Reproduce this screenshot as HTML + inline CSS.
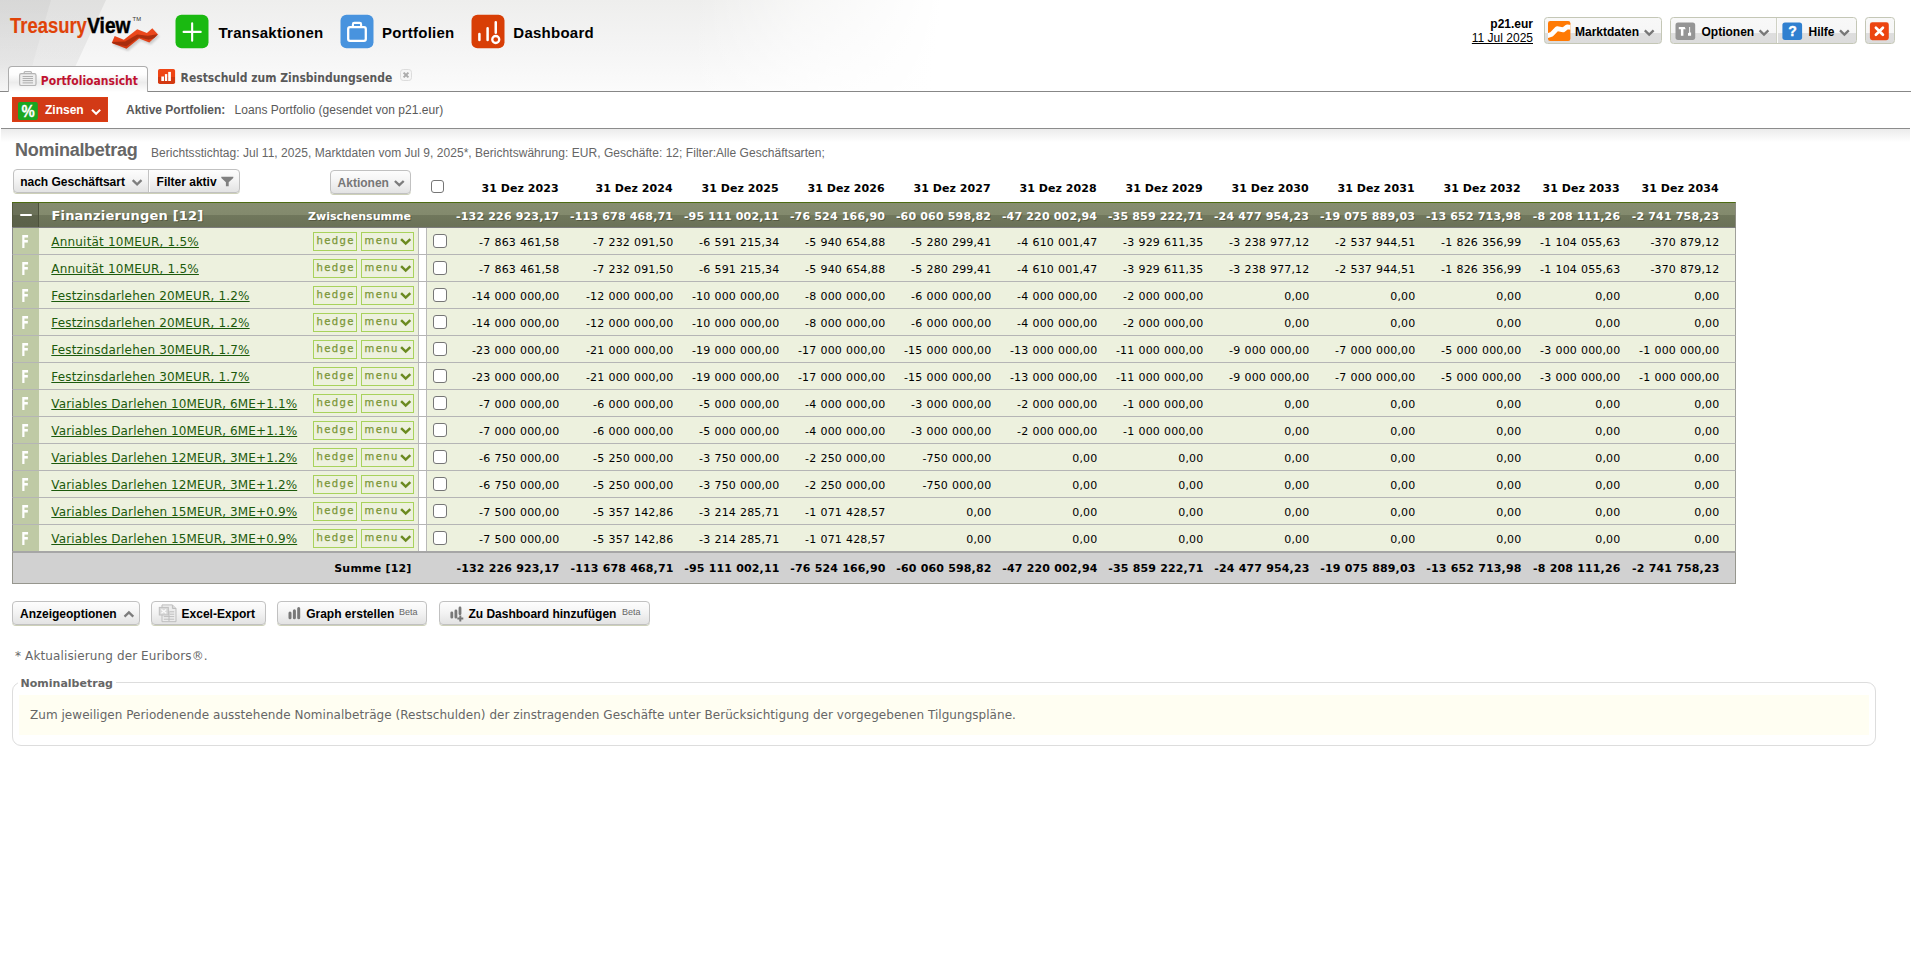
<!DOCTYPE html>
<html lang="de"><head><meta charset="utf-8"><title>TreasuryView - Portfolioansicht</title>
<style>
html,body{margin:0;padding:0}
body{width:1912px;height:954px;overflow:hidden;background:#fff;position:relative;font-family:"Liberation Sans",sans-serif;font-size:12px;color:#000}
*{box-sizing:border-box}
.V{font-family:"DejaVu Sans","Liberation Sans",sans-serif}
/* ---------- header ---------- */
#hdr{position:absolute;left:0;top:0;width:1912px;height:91px;
 background:linear-gradient(97deg,rgba(255,255,255,0) 0,rgba(255,255,255,0) 690px,rgba(255,255,255,.55) 800px,rgba(255,255,255,1) 935px),linear-gradient(to bottom,#eeeeed 0,#f4f4f4 45px,#fbfbfb 91px)}
#hdr svg.bg{position:absolute;left:0;top:0}
#hline{position:absolute;left:0;top:91px;width:1911px;height:1px;background:#878787}
#logo{position:absolute;left:0;top:0}
.nav{position:absolute;top:14.7px;width:33px;height:33.5px;border-radius:6px}
.navt{position:absolute;top:24px;font:bold 15px/18px "Liberation Sans",sans-serif;color:#000;white-space:nowrap;letter-spacing:0.25px}
#user{position:absolute;left:1400px;width:133px;top:16px;text-align:right;font:12px/15px "Liberation Sans",sans-serif;color:#000}
#user b{display:block;position:relative;top:1.3px}
#user u{display:block}
.tb{position:absolute;top:17px;height:27px;border:1px solid #c4c7b6;border-radius:3.5px;background:linear-gradient(to bottom,#f8f8f8 0,#f6f6f6 59%,#dedede 62%,#dcdcdc 100%);font:bold 12px/25px "Liberation Sans",sans-serif;color:#000;white-space:nowrap}
.tb span{position:absolute;top:1.5px}
.tb svg{position:absolute}
/* tabs */
#tab1{position:absolute;left:8px;top:66px;width:140px;height:26px;border:1px solid #adadad;border-bottom:none;border-radius:4px 4px 0 0;background:linear-gradient(to bottom,#fff 0,#fdfdfd 30%,#ececec 62%,#fff 100%)}
.tabt{position:absolute;font:bold 12px/15px "DejaVu Sans Condensed","DejaVu Sans",sans-serif;white-space:nowrap}
/* toolbar */
#tool{position:absolute;left:0;top:92px;width:1912px;height:36px;background:#fff}
#tline{position:absolute;left:1px;top:128px;width:1909px;height:1px;background:#8c8c8c}
#tshade{position:absolute;left:1px;top:129px;width:1909px;height:13px;background:linear-gradient(to bottom,#ebebeb,#fff)}
#zins{position:absolute;left:12px;top:97px;width:96px;height:25px;background:#d23a16;border:1px solid #de3d12}
#zins span{position:absolute;left:32px;top:5px;font:bold 12px/15px "Liberation Sans",sans-serif;color:#fff}
.g{color:#595959}
/* heading */
#h1{position:absolute;left:15px;top:139px;font:bold 18px/22px "Liberation Sans",sans-serif;color:#666;letter-spacing:-0.27px;white-space:nowrap}
#h1s{position:absolute;left:151px;top:146px;font:12px/15px "Liberation Sans",sans-serif;color:#666;white-space:nowrap;letter-spacing:0.035px}
.btn{position:absolute;height:24px;border:1px solid #c1c1c1;border-radius:4px;background:linear-gradient(to bottom,#fdfdfd 0,#f4f4f4 45%,#e3e3e3 100%);box-shadow:0 1px 0 #cdd0b8;font:bold 12px/22px "Liberation Sans",sans-serif;color:#000;white-space:nowrap}
.btn span{position:absolute;top:1px}
.btn svg{position:absolute}
.beta{font:9px/10px "Liberation Sans",sans-serif;color:#666;font-weight:normal}
/* ---------- table ---------- */
#tbl{position:absolute;left:0;top:0;width:1912px;height:600px;font-family:"DejaVu Sans",sans-serif}
.n{position:absolute;width:130px;text-align:right;white-space:nowrap;font-size:11px}
#colhdr{position:absolute;left:0;top:0}
.ch{margin-left:-.3px;top:181px;line-height:15px;font-weight:bold;color:#000;letter-spacing:.05px}
#grp{position:absolute;left:12px;top:202px;width:1724px;height:26px;border-top:1px solid #4d6b12;border-bottom:1px solid #7d7d7d;border-right:1px solid #8c8c80;background:linear-gradient(to bottom,#868d70 0,#838a6d 50%,#70775c 52%,#6a7157 100%)}
#grp .n,#sum .n,.row .n{margin-left:-12.4px}
#grp .tg{position:absolute;left:0;top:0;width:27px;height:24px;border-left:1px solid #55593f;border-right:1px solid #4c513b;background:linear-gradient(to bottom,#6c725a 0,#6b7158 50%,#5d634b 52%,#5b6149 100%)}
#grp .tg i{position:absolute;left:7px;top:11px;width:12px;height:2px;background:#fff;border-radius:1px}
.gt{position:absolute;left:39.4px;top:4px;font:bold 13px/18px "DejaVu Sans",sans-serif;color:#fff;letter-spacing:0.2px;text-shadow:1px 1px 0 rgba(60,60,40,.5)}
.zs{position:absolute;left:296px;top:6px;font:bold 11px/15px "DejaVu Sans",sans-serif;color:#fff;text-shadow:1px 1px 0 rgba(60,60,40,.5)}
.gs{margin-left:-11.8px !important;top:6px;line-height:15px;font-weight:bold;color:#fff;letter-spacing:.17px;text-shadow:1px 1px 0 rgba(60,60,40,.5)}
.row{position:absolute;left:12px;width:1724px;height:27px;background:#edf1de;border-left:1px solid #8a8a8a;border-right:1px solid #a0a09a;border-bottom:1px solid #b5b5b5}
.row .f{position:absolute;left:0;top:0;width:26px;height:26px;background:#bfcaa5}
.row .f b{position:absolute;left:-1.2px;top:4px;width:26px;text-align:center;font:bold 17px/20px "DejaVu Sans Condensed","DejaVu Sans",sans-serif;color:#fff;transform:scaleX(.74)}
.lnk{position:absolute;left:38.3px;top:6px;font:12px/16px "DejaVu Sans",sans-serif;color:#1c5a0c;text-decoration:underline;letter-spacing:0.13px;white-space:nowrap}
.hb{position:absolute;top:4px;height:19px;border:1px solid #a8d25c;font:10px/13px "DejaVu Sans",sans-serif;color:#7a9637;letter-spacing:1.35px;padding:1px 0 0 2.6px;-webkit-text-stroke:.25px #7a9637}
.hedge{left:300px;width:44px}
.menu{left:348px;width:53px}
.menu svg{position:absolute;left:37.6px;top:4.6px}
.gap{position:absolute;left:405px;top:0;width:9px;height:26px;background:#fff;border-left:1px solid #b9b9b9;border-right:1px solid #b9b9b9}
.cb{position:absolute;left:420px;top:6px;width:14px;height:14px;border:1px solid #767676;border-radius:3px;background:#fff}
.d{top:7px;line-height:15px;color:#000;word-spacing:0.6px;letter-spacing:.12px;margin-left:-12.7px !important}
#sum{position:absolute;left:12px;top:551px;width:1724px;height:33px;background:#d1d1d1;border:1px solid #96968e;border-top:2px solid #a6a6a6}
.sl{position:absolute;left:199.6px;width:199px;top:8px;text-align:right;font:bold 11px/15px "DejaVu Sans",sans-serif;color:#000;letter-spacing:.2px}
.sm{top:8px;line-height:15px;font-weight:bold;color:#000;letter-spacing:.17px}
/* footer */
#note{position:absolute;left:15px;top:649px;font:12px/15px "DejaVu Sans",sans-serif;color:#666;letter-spacing:0.12px;white-space:nowrap}
#fs{position:absolute;left:12px;top:682px;width:1864px;height:64px;border:1px solid #ddd;border-radius:9px}
#fs b{position:absolute;left:4.6px;top:-6px;padding:0 3px;background:#fff;font:bold 11px/14px "DejaVu Sans",sans-serif;color:#666}
#fs div{position:absolute;left:6px;top:12px;width:1850px;height:40px;background:#fffef2;box-sizing:border-box;padding:13px 0 0 11px;font:12px/15px "DejaVu Sans",sans-serif;color:#666;letter-spacing:0.04px;white-space:nowrap}

</style></head><body>
<div id="hdr">
<svg class="bg" width="200" height="91" viewBox="0 0 200 91">
 <defs><linearGradient id="fa" x1="0" y1="0" x2="0" y2="1"><stop offset="0" stop-color="#000" stop-opacity=".095"/><stop offset=".7" stop-color="#000" stop-opacity=".07"/><stop offset="1" stop-color="#000" stop-opacity=".02"/></linearGradient>
 <linearGradient id="fb" x1="0" y1="0" x2="0" y2="1"><stop offset="0" stop-color="#000" stop-opacity=".06"/><stop offset=".7" stop-color="#000" stop-opacity=".05"/><stop offset="1" stop-color="#000" stop-opacity=".015"/></linearGradient></defs>
 <polygon points="0,0 51,0 25,91 0,91" fill="url(#fa)"/>
 <polygon points="51,0 106,0 64,91 25,91" fill="url(#fb)"/>
</svg>
<svg id="logo" width="170" height="60" viewBox="0 0 170 60">
 <defs><linearGradient id="sw" x1="0" y1="0" x2="0" y2="1"><stop offset="0" stop-color="#ee4a1e"/><stop offset=".5" stop-color="#e8441a"/><stop offset="1" stop-color="#cc3812"/></linearGradient>
 <filter id="bl" x="-20%" y="-20%" width="140%" height="140%"><feGaussianBlur stdDeviation=".55"/></filter>
 <filter id="bs" x="-20%" y="-20%" width="140%" height="150%"><feGaussianBlur stdDeviation="1"/></filter>
 <clipPath id="swc"><polygon points="114.7,36.1 123.8,39.8 137.2,29.2 146.9,32.9 152.3,28.2 158,34.4 149.3,42.5 139.2,38.4 126.5,48.8 111.7,43.1"/></clipPath></defs>
 <polygon points="116.2,38.3 125.3,42 138.7,31.4 148.4,35.1 153.8,30.4 159.5,36.6 150.8,44.7 140.7,40.6 128,51 113.2,45.3" fill="#000" opacity=".16" filter="url(#bs)"/>
 <polygon points="114.7,36.1 123.8,39.8 137.2,29.2 146.9,32.9 152.3,28.2 158,34.4 149.3,42.5 139.2,38.4 126.5,48.8 111.7,43.1" fill="url(#sw)"/>
 <g clip-path="url(#swc)"><polygon points="112,42.1 125.1,41.6 137.2,34.6 147.9,35.7 157.6,34.2 155.3,38 148.6,39.8 138.9,37.5 126.5,46.2 113,44" fill="#9c2a0e" opacity=".8" filter="url(#bl)"/></g>
 <text x="10" y="33.4" font-family="Liberation Sans, sans-serif" font-size="21.5" font-weight="bold" fill="#e04308" stroke="#e04308" stroke-width=".15" textLength="76.8" lengthAdjust="spacingAndGlyphs">Treasury</text>
 <text x="87.2" y="33.4" font-family="Liberation Sans, sans-serif" font-size="21.5" font-weight="bold" fill="#000" stroke="#000" stroke-width=".45" textLength="43.3" lengthAdjust="spacingAndGlyphs">View</text>
 <text x="132.6" y="20.8" font-family="Liberation Sans, sans-serif" font-size="4.6" fill="#333" textLength="8.4" lengthAdjust="spacingAndGlyphs">TM</text>
</svg>
<svg style="position:absolute;left:175px;top:14px" width="34" height="35" viewBox="0 0 34 35"><g transform="translate(0.5 0.7)"><rect width="33" height="33.5" rx="6" fill="#1ab911"/><path d="M8.1 17.2H25.2M16.65 8.5V26" stroke="#fff" stroke-width="2.1" stroke-linecap="round" fill="none"/></g></svg>
<span class="navt" style="left:218.5px">Transaktionen</span>
<svg style="position:absolute;left:340px;top:14px" width="34" height="35" viewBox="0 0 34 35"><g transform="translate(0.5 0.7)"><rect width="33" height="33.5" rx="6" fill="#4893de"/><rect x="7.7" y="12.4" width="17.6" height="13.8" rx="1.8" fill="none" stroke="#fff" stroke-width="2.3"/><path d="M12.4 11.8V9.6Q12.4 8.2 13.8 8.2H19.2Q20.6 8.2 20.6 9.6V11.8" fill="none" stroke="#fff" stroke-width="2.1"/></g></svg>
<span class="navt" style="left:382px">Portfolien</span>
<svg style="position:absolute;left:471px;top:14px" width="34" height="35" viewBox="0 0 34 35"><g transform="translate(0.5 0.7)"><rect width="33" height="33.5" rx="6" fill="#d83e06"/><path d="M7.9 19.2V25.4M16.1 13.6V25.4M24.25 7.6V18" stroke="#fff" stroke-width="2.5" stroke-linecap="round" fill="none"/><circle cx="24.25" cy="24.8" r="3.5" fill="none" stroke="#fff" stroke-width="2.3"/></g></svg>
<span class="navt" style="left:513.3px">Dashboard</span>

<div id="user"><b>p21.eur</b><u>11 Jul 2025</u></div>

<div class="tb" style="left:1544px;width:118px">
 <svg style="left:3px;top:3px" width="23" height="20" viewBox="0 0 23 20"><defs><clipPath id="mk"><rect x="0" y="0" width="22.4" height="20" rx="2.2"/></clipPath></defs><rect x="0" y="0" width="22.4" height="20" rx="2.2" fill="#ff7a05"/><path clip-path="url(#mk)" d="M-1 14.9 L3.8 13.2 L9.1 7.7 L15.3 8.9 L19.1 5.9 L23.5 6.5" fill="none" stroke="#fff" stroke-width="4.8" stroke-linejoin="round"/></svg>
 <span style="left:30px">Marktdaten</span>
 <svg style="left:98px;top:11px" width="12" height="8" viewBox="0 0 12 8"><g transform="translate(0.8 0.4)"><path d="M1 1 L5.4 5.2 L9.8 1" fill="none" stroke="#777" stroke-width="2.3"/></g></svg>
</div>
<div class="tb" style="left:1670px;width:187px">
 <svg style="left:4px;top:4px" width="21" height="19" viewBox="0 0 21 19"><g transform="translate(0.5 0.4)"><rect width="19.7" height="17.5" rx="2.6" fill="#959595"/><path d="M3.3 4.7H9.2L10.2 6.9H7.9V13.4H5.4V6.9H3.3Z" fill="#fff"/><path d="M13.7 4.5H14.6V10H15.6V13.4H12.5V10.8L13.7 10Z" fill="#fff"/></g></svg>
 <span style="left:30.5px">Optionen</span>
 <svg style="left:87px;top:11px" width="12" height="8" viewBox="0 0 12 8"><g transform="translate(0.6 0.4)"><path d="M1 1 L5.4 5.2 L9.8 1" fill="none" stroke="#777" stroke-width="2.3"/></g></svg>
 <i style="position:absolute;left:104.5px;top:0;width:1px;height:25px;background:#cfd1c4"></i><i style="position:absolute;left:105.5px;top:0;width:1px;height:25px;background:#fbfbfb"></i>
 <svg style="left:111px;top:4px" width="21" height="19" viewBox="0 0 21 19"><g transform="translate(0.4 0.4)"><rect width="19.7" height="17.5" rx="2.6" fill="#3080d0"/><text x="10.1" y="13.5" text-anchor="middle" font-family="Liberation Sans, sans-serif" font-weight="bold" font-size="14" fill="#fff" stroke="#fff" stroke-width=".35">?</text></g></svg>
 <span style="left:137.5px">Hilfe</span>
 <svg style="left:168px;top:11px" width="12" height="8" viewBox="0 0 12 8"><g transform="translate(0.0 0.4)"><path d="M1 1 L5.4 5.2 L9.8 1" fill="none" stroke="#777" stroke-width="2.3"/></g></svg>
</div>
<div class="tb" style="left:1865px;width:30px">
 <svg style="left:3px;top:4px" width="20" height="19" viewBox="0 0 20 19"><g transform="translate(0.9 0.3)"><rect width="18.9" height="17.9" rx="2.4" fill="#ec4410"/><path d="M6 5.4L13 12.4M13 5.4L6 12.4" stroke="#fff" stroke-width="2.7" stroke-linecap="round"/></g></svg>
</div>
</div>
<div id="hline"></div>
<div id="tab1">
 <svg style="position:absolute;left:10px;top:4px" width="19" height="17" viewBox="0 0 19 17"><path d="M5.2 3V1.6Q5.2 .7 6.1 .7H11.5Q12.4 .7 12.4 1.6V3" fill="none" stroke="#b5b5b5" stroke-width="1.3"/><rect x=".6" y="2.7" width="16.4" height="11.8" rx="1.6" fill="#ededed" stroke="#b4b4b4" stroke-width="1.2"/><path d="M3.6 5.5H14M3.6 7.5H14M3.6 9.5H14" stroke="#b0b0b0" stroke-width="1"/><rect x="3.6" y="10.8" width="10.4" height="1.8" fill="#c4c4c4"/></svg>
 <span class="tabt" style="left:31.8px;top:7px;color:#c01230">Portfolioansicht</span>
</div>
<svg style="position:absolute;left:158px;top:69px" width="18" height="15" viewBox="0 0 18 15"><defs><linearGradient id="t2" x1="0" y1="0" x2="0" y2="1"><stop offset="0" stop-color="#ef4616"/><stop offset=".5" stop-color="#ee4212"/><stop offset=".55" stop-color="#d2370f"/><stop offset="1" stop-color="#d43a12"/></linearGradient></defs><rect width="17.1" height="15" rx="1.8" fill="url(#t2)"/><rect x="3.3" y="7.5" width="2.7" height="4.5" fill="#fff"/><rect x="6.9" y="5.1" width="2.3" height="6.9" fill="#fff"/><rect x="10.2" y="2.9" width="2.7" height="9.1" fill="#fff"/></svg>
<span class="tabt" style="left:180.6px;top:71.3px;color:#595959">Restschuld zum Zinsbindungsende</span>
<svg style="position:absolute;left:400px;top:69px" width="12" height="12" viewBox="0 0 12 12"><rect x=".5" y=".5" width="11" height="11" rx="2.8" fill="#f6f6f6" stroke="#dcdcdc"/><path d="M3.6 3.6L8.4 8.4M8.4 3.6L3.6 8.4" stroke="#ababab" stroke-width="2"/></svg>

<div id="tool"></div>
<div id="zins">
 <svg style="position:absolute;left:5px;top:4px" width="20" height="18" viewBox="0 0 20 18"><rect width="19.8" height="18" rx="2" fill="#1aa621"/><text x="10" y="15.2" text-anchor="middle" font-family="Liberation Sans, sans-serif" font-weight="bold" font-size="16.5" fill="#fff" stroke="#fff" stroke-width=".3" textLength="13.2" lengthAdjust="spacingAndGlyphs">%</text></svg>
 <span>Zinsen</span>
 <svg style="position:absolute;left:78px;top:10px" width="12" height="8" viewBox="0 0 12 8"><g transform="translate(0.0 0.8)"><path d="M1 1 L5.1 5 L9.2 1" fill="none" stroke="#fff" stroke-width="2"/></g></svg>
</div>
<span class="abs g" style="position:absolute;left:126px;top:103px;font:bold 12px/15px 'Liberation Sans',sans-serif;white-space:nowrap">Aktive Portfolien:</span>
<span class="abs g" style="position:absolute;left:234.6px;top:103px;font:12px/15px 'Liberation Sans',sans-serif;white-space:nowrap;letter-spacing:0.03px">Loans Portfolio (gesendet von p21.eur)</span>
<div id="tline"></div><div id="tshade"></div>

<div id="h1">Nominalbetrag</div>
<div id="h1s">Berichtsstichtag: Jul 11, 2025, Marktdaten vom Jul 9, 2025*, Berichtswährung: EUR, Geschäfte: 12; Filter:Alle Geschäftsarten;</div>

<div class="btn" style="left:13px;top:169px;width:227px">
 <span style="left:6.2px">nach Geschäftsart</span>
 <svg style="left:117px;top:9px" width="12" height="8" viewBox="0 0 12 8"><g transform="translate(0.7 0.2)"><path d="M1 1 L5.4 5.2 L9.8 1" fill="none" stroke="#7e7e7e" stroke-width="2.3"/></g></svg>
 <i style="position:absolute;left:134px;top:0;width:1px;height:22px;background:#c3c3c3"></i><i style="position:absolute;left:135px;top:0;width:1px;height:22px;background:#fdfdfd"></i>
 <span style="left:142.6px">Filter aktiv</span>
 <svg style="left:207px;top:6px" width="14" height="11" viewBox="0 0 14 11"><g transform="translate(0.0 0.6)"><path d="M.3 .2H12.3V1.5L7.7 5.6V9.6H4.9V5.6L.3 1.5Z" fill="#808080"/></g></svg>
</div>
<div class="btn" style="left:330px;top:170px;width:81px;color:#777">
 <span style="left:6.6px">Aktionen</span>
 <svg style="left:62px;top:9px" width="12" height="8" viewBox="0 0 12 8"><g transform="translate(0.9 0.0)"><path d="M1 1 L5.4 5.2 L9.8 1" fill="none" stroke="#7c7c7c" stroke-width="2.3"/></g></svg>
</div>
<span class="cb" style="left:431px;top:180px;width:13px;height:13px;box-sizing:border-box"></span>

<div id="tbl">
<div id="colhdr"><span class="n ch" style="left:429px">31 Dez 2023</span><span class="n ch" style="left:543px">31 Dez 2024</span><span class="n ch" style="left:649px">31 Dez 2025</span><span class="n ch" style="left:755px">31 Dez 2026</span><span class="n ch" style="left:861px">31 Dez 2027</span><span class="n ch" style="left:967px">31 Dez 2028</span><span class="n ch" style="left:1073px">31 Dez 2029</span><span class="n ch" style="left:1179px">31 Dez 2030</span><span class="n ch" style="left:1285px">31 Dez 2031</span><span class="n ch" style="left:1391px">31 Dez 2032</span><span class="n ch" style="left:1490px">31 Dez 2033</span><span class="n ch" style="left:1589px">31 Dez 2034</span></div>
<div id="grp"><div class="tg"><i></i></div><span class="gt">Finanzierungen [12]</span><span class="zs">Zwischensumme</span><span class="n gs" style="left:429px">-132 226 923,17</span><span class="n gs" style="left:543px">-113 678 468,71</span><span class="n gs" style="left:649px">-95 111 002,11</span><span class="n gs" style="left:755px">-76 524 166,90</span><span class="n gs" style="left:861px">-60 060 598,82</span><span class="n gs" style="left:967px">-47 220 002,94</span><span class="n gs" style="left:1073px">-35 859 222,71</span><span class="n gs" style="left:1179px">-24 477 954,23</span><span class="n gs" style="left:1285px">-19 075 889,03</span><span class="n gs" style="left:1391px">-13 652 713,98</span><span class="n gs" style="left:1490px">-8 208 111,26</span><span class="n gs" style="left:1589px">-2 741 758,23</span></div>
<div class="row" style="top:228px"><div class="f"><b>F</b></div><a class="lnk" style="letter-spacing:0.2px">Annuität 10MEUR, 1.5%</a><span class="hb hedge">hedge</span><span class="hb menu">menu<svg width="12" height="8" viewBox="0 0 12 8"><path d="M1.1 1.1 L5.7 5.6 L10.3 1.1" fill="none" stroke="#6b8a20" stroke-width="2.5"/></svg></span><div class="gap"></div><span class="cb"></span><span class="n d" style="left:429px">-7 863 461,58</span><span class="n d" style="left:543px">-7 232 091,50</span><span class="n d" style="left:649px">-6 591 215,34</span><span class="n d" style="left:755px">-5 940 654,88</span><span class="n d" style="left:861px">-5 280 299,41</span><span class="n d" style="left:967px">-4 610 001,47</span><span class="n d" style="left:1073px">-3 929 611,35</span><span class="n d" style="left:1179px">-3 238 977,12</span><span class="n d" style="left:1285px">-2 537 944,51</span><span class="n d" style="left:1391px">-1 826 356,99</span><span class="n d" style="left:1490px">-1 104 055,63</span><span class="n d" style="left:1589px">-370 879,12</span></div>
<div class="row" style="top:255px"><div class="f"><b>F</b></div><a class="lnk" style="letter-spacing:0.2px">Annuität 10MEUR, 1.5%</a><span class="hb hedge">hedge</span><span class="hb menu">menu<svg width="12" height="8" viewBox="0 0 12 8"><path d="M1.1 1.1 L5.7 5.6 L10.3 1.1" fill="none" stroke="#6b8a20" stroke-width="2.5"/></svg></span><div class="gap"></div><span class="cb"></span><span class="n d" style="left:429px">-7 863 461,58</span><span class="n d" style="left:543px">-7 232 091,50</span><span class="n d" style="left:649px">-6 591 215,34</span><span class="n d" style="left:755px">-5 940 654,88</span><span class="n d" style="left:861px">-5 280 299,41</span><span class="n d" style="left:967px">-4 610 001,47</span><span class="n d" style="left:1073px">-3 929 611,35</span><span class="n d" style="left:1179px">-3 238 977,12</span><span class="n d" style="left:1285px">-2 537 944,51</span><span class="n d" style="left:1391px">-1 826 356,99</span><span class="n d" style="left:1490px">-1 104 055,63</span><span class="n d" style="left:1589px">-370 879,12</span></div>
<div class="row" style="top:282px"><div class="f"><b>F</b></div><a class="lnk" style="letter-spacing:0.165px">Festzinsdarlehen 20MEUR, 1.2%</a><span class="hb hedge">hedge</span><span class="hb menu">menu<svg width="12" height="8" viewBox="0 0 12 8"><path d="M1.1 1.1 L5.7 5.6 L10.3 1.1" fill="none" stroke="#6b8a20" stroke-width="2.5"/></svg></span><div class="gap"></div><span class="cb"></span><span class="n d" style="left:429px">-14 000 000,00</span><span class="n d" style="left:543px">-12 000 000,00</span><span class="n d" style="left:649px">-10 000 000,00</span><span class="n d" style="left:755px">-8 000 000,00</span><span class="n d" style="left:861px">-6 000 000,00</span><span class="n d" style="left:967px">-4 000 000,00</span><span class="n d" style="left:1073px">-2 000 000,00</span><span class="n d" style="left:1179px">0,00</span><span class="n d" style="left:1285px">0,00</span><span class="n d" style="left:1391px">0,00</span><span class="n d" style="left:1490px">0,00</span><span class="n d" style="left:1589px">0,00</span></div>
<div class="row" style="top:309px"><div class="f"><b>F</b></div><a class="lnk" style="letter-spacing:0.165px">Festzinsdarlehen 20MEUR, 1.2%</a><span class="hb hedge">hedge</span><span class="hb menu">menu<svg width="12" height="8" viewBox="0 0 12 8"><path d="M1.1 1.1 L5.7 5.6 L10.3 1.1" fill="none" stroke="#6b8a20" stroke-width="2.5"/></svg></span><div class="gap"></div><span class="cb"></span><span class="n d" style="left:429px">-14 000 000,00</span><span class="n d" style="left:543px">-12 000 000,00</span><span class="n d" style="left:649px">-10 000 000,00</span><span class="n d" style="left:755px">-8 000 000,00</span><span class="n d" style="left:861px">-6 000 000,00</span><span class="n d" style="left:967px">-4 000 000,00</span><span class="n d" style="left:1073px">-2 000 000,00</span><span class="n d" style="left:1179px">0,00</span><span class="n d" style="left:1285px">0,00</span><span class="n d" style="left:1391px">0,00</span><span class="n d" style="left:1490px">0,00</span><span class="n d" style="left:1589px">0,00</span></div>
<div class="row" style="top:336px"><div class="f"><b>F</b></div><a class="lnk" style="letter-spacing:0.165px">Festzinsdarlehen 30MEUR, 1.7%</a><span class="hb hedge">hedge</span><span class="hb menu">menu<svg width="12" height="8" viewBox="0 0 12 8"><path d="M1.1 1.1 L5.7 5.6 L10.3 1.1" fill="none" stroke="#6b8a20" stroke-width="2.5"/></svg></span><div class="gap"></div><span class="cb"></span><span class="n d" style="left:429px">-23 000 000,00</span><span class="n d" style="left:543px">-21 000 000,00</span><span class="n d" style="left:649px">-19 000 000,00</span><span class="n d" style="left:755px">-17 000 000,00</span><span class="n d" style="left:861px">-15 000 000,00</span><span class="n d" style="left:967px">-13 000 000,00</span><span class="n d" style="left:1073px">-11 000 000,00</span><span class="n d" style="left:1179px">-9 000 000,00</span><span class="n d" style="left:1285px">-7 000 000,00</span><span class="n d" style="left:1391px">-5 000 000,00</span><span class="n d" style="left:1490px">-3 000 000,00</span><span class="n d" style="left:1589px">-1 000 000,00</span></div>
<div class="row" style="top:363px"><div class="f"><b>F</b></div><a class="lnk" style="letter-spacing:0.165px">Festzinsdarlehen 30MEUR, 1.7%</a><span class="hb hedge">hedge</span><span class="hb menu">menu<svg width="12" height="8" viewBox="0 0 12 8"><path d="M1.1 1.1 L5.7 5.6 L10.3 1.1" fill="none" stroke="#6b8a20" stroke-width="2.5"/></svg></span><div class="gap"></div><span class="cb"></span><span class="n d" style="left:429px">-23 000 000,00</span><span class="n d" style="left:543px">-21 000 000,00</span><span class="n d" style="left:649px">-19 000 000,00</span><span class="n d" style="left:755px">-17 000 000,00</span><span class="n d" style="left:861px">-15 000 000,00</span><span class="n d" style="left:967px">-13 000 000,00</span><span class="n d" style="left:1073px">-11 000 000,00</span><span class="n d" style="left:1179px">-9 000 000,00</span><span class="n d" style="left:1285px">-7 000 000,00</span><span class="n d" style="left:1391px">-5 000 000,00</span><span class="n d" style="left:1490px">-3 000 000,00</span><span class="n d" style="left:1589px">-1 000 000,00</span></div>
<div class="row" style="top:390px"><div class="f"><b>F</b></div><a class="lnk" style="letter-spacing:0.13px">Variables Darlehen 10MEUR, 6ME+1.1%</a><span class="hb hedge">hedge</span><span class="hb menu">menu<svg width="12" height="8" viewBox="0 0 12 8"><path d="M1.1 1.1 L5.7 5.6 L10.3 1.1" fill="none" stroke="#6b8a20" stroke-width="2.5"/></svg></span><div class="gap"></div><span class="cb"></span><span class="n d" style="left:429px">-7 000 000,00</span><span class="n d" style="left:543px">-6 000 000,00</span><span class="n d" style="left:649px">-5 000 000,00</span><span class="n d" style="left:755px">-4 000 000,00</span><span class="n d" style="left:861px">-3 000 000,00</span><span class="n d" style="left:967px">-2 000 000,00</span><span class="n d" style="left:1073px">-1 000 000,00</span><span class="n d" style="left:1179px">0,00</span><span class="n d" style="left:1285px">0,00</span><span class="n d" style="left:1391px">0,00</span><span class="n d" style="left:1490px">0,00</span><span class="n d" style="left:1589px">0,00</span></div>
<div class="row" style="top:417px"><div class="f"><b>F</b></div><a class="lnk" style="letter-spacing:0.13px">Variables Darlehen 10MEUR, 6ME+1.1%</a><span class="hb hedge">hedge</span><span class="hb menu">menu<svg width="12" height="8" viewBox="0 0 12 8"><path d="M1.1 1.1 L5.7 5.6 L10.3 1.1" fill="none" stroke="#6b8a20" stroke-width="2.5"/></svg></span><div class="gap"></div><span class="cb"></span><span class="n d" style="left:429px">-7 000 000,00</span><span class="n d" style="left:543px">-6 000 000,00</span><span class="n d" style="left:649px">-5 000 000,00</span><span class="n d" style="left:755px">-4 000 000,00</span><span class="n d" style="left:861px">-3 000 000,00</span><span class="n d" style="left:967px">-2 000 000,00</span><span class="n d" style="left:1073px">-1 000 000,00</span><span class="n d" style="left:1179px">0,00</span><span class="n d" style="left:1285px">0,00</span><span class="n d" style="left:1391px">0,00</span><span class="n d" style="left:1490px">0,00</span><span class="n d" style="left:1589px">0,00</span></div>
<div class="row" style="top:444px"><div class="f"><b>F</b></div><a class="lnk" style="letter-spacing:0.13px">Variables Darlehen 12MEUR, 3ME+1.2%</a><span class="hb hedge">hedge</span><span class="hb menu">menu<svg width="12" height="8" viewBox="0 0 12 8"><path d="M1.1 1.1 L5.7 5.6 L10.3 1.1" fill="none" stroke="#6b8a20" stroke-width="2.5"/></svg></span><div class="gap"></div><span class="cb"></span><span class="n d" style="left:429px">-6 750 000,00</span><span class="n d" style="left:543px">-5 250 000,00</span><span class="n d" style="left:649px">-3 750 000,00</span><span class="n d" style="left:755px">-2 250 000,00</span><span class="n d" style="left:861px">-750 000,00</span><span class="n d" style="left:967px">0,00</span><span class="n d" style="left:1073px">0,00</span><span class="n d" style="left:1179px">0,00</span><span class="n d" style="left:1285px">0,00</span><span class="n d" style="left:1391px">0,00</span><span class="n d" style="left:1490px">0,00</span><span class="n d" style="left:1589px">0,00</span></div>
<div class="row" style="top:471px"><div class="f"><b>F</b></div><a class="lnk" style="letter-spacing:0.13px">Variables Darlehen 12MEUR, 3ME+1.2%</a><span class="hb hedge">hedge</span><span class="hb menu">menu<svg width="12" height="8" viewBox="0 0 12 8"><path d="M1.1 1.1 L5.7 5.6 L10.3 1.1" fill="none" stroke="#6b8a20" stroke-width="2.5"/></svg></span><div class="gap"></div><span class="cb"></span><span class="n d" style="left:429px">-6 750 000,00</span><span class="n d" style="left:543px">-5 250 000,00</span><span class="n d" style="left:649px">-3 750 000,00</span><span class="n d" style="left:755px">-2 250 000,00</span><span class="n d" style="left:861px">-750 000,00</span><span class="n d" style="left:967px">0,00</span><span class="n d" style="left:1073px">0,00</span><span class="n d" style="left:1179px">0,00</span><span class="n d" style="left:1285px">0,00</span><span class="n d" style="left:1391px">0,00</span><span class="n d" style="left:1490px">0,00</span><span class="n d" style="left:1589px">0,00</span></div>
<div class="row" style="top:498px"><div class="f"><b>F</b></div><a class="lnk" style="letter-spacing:0.13px">Variables Darlehen 15MEUR, 3ME+0.9%</a><span class="hb hedge">hedge</span><span class="hb menu">menu<svg width="12" height="8" viewBox="0 0 12 8"><path d="M1.1 1.1 L5.7 5.6 L10.3 1.1" fill="none" stroke="#6b8a20" stroke-width="2.5"/></svg></span><div class="gap"></div><span class="cb"></span><span class="n d" style="left:429px">-7 500 000,00</span><span class="n d" style="left:543px">-5 357 142,86</span><span class="n d" style="left:649px">-3 214 285,71</span><span class="n d" style="left:755px">-1 071 428,57</span><span class="n d" style="left:861px">0,00</span><span class="n d" style="left:967px">0,00</span><span class="n d" style="left:1073px">0,00</span><span class="n d" style="left:1179px">0,00</span><span class="n d" style="left:1285px">0,00</span><span class="n d" style="left:1391px">0,00</span><span class="n d" style="left:1490px">0,00</span><span class="n d" style="left:1589px">0,00</span></div>
<div class="row" style="top:525px"><div class="f"><b>F</b></div><a class="lnk" style="letter-spacing:0.13px">Variables Darlehen 15MEUR, 3ME+0.9%</a><span class="hb hedge">hedge</span><span class="hb menu">menu<svg width="12" height="8" viewBox="0 0 12 8"><path d="M1.1 1.1 L5.7 5.6 L10.3 1.1" fill="none" stroke="#6b8a20" stroke-width="2.5"/></svg></span><div class="gap"></div><span class="cb"></span><span class="n d" style="left:429px">-7 500 000,00</span><span class="n d" style="left:543px">-5 357 142,86</span><span class="n d" style="left:649px">-3 214 285,71</span><span class="n d" style="left:755px">-1 071 428,57</span><span class="n d" style="left:861px">0,00</span><span class="n d" style="left:967px">0,00</span><span class="n d" style="left:1073px">0,00</span><span class="n d" style="left:1179px">0,00</span><span class="n d" style="left:1285px">0,00</span><span class="n d" style="left:1391px">0,00</span><span class="n d" style="left:1490px">0,00</span><span class="n d" style="left:1589px">0,00</span></div>
<div id="sum"><span class="sl">Summe [12]</span><span class="n sm" style="left:429px">-132 226 923,17</span><span class="n sm" style="left:543px">-113 678 468,71</span><span class="n sm" style="left:649px">-95 111 002,11</span><span class="n sm" style="left:755px">-76 524 166,90</span><span class="n sm" style="left:861px">-60 060 598,82</span><span class="n sm" style="left:967px">-47 220 002,94</span><span class="n sm" style="left:1073px">-35 859 222,71</span><span class="n sm" style="left:1179px">-24 477 954,23</span><span class="n sm" style="left:1285px">-19 075 889,03</span><span class="n sm" style="left:1391px">-13 652 713,98</span><span class="n sm" style="left:1490px">-8 208 111,26</span><span class="n sm" style="left:1589px">-2 741 758,23</span></div>
</div>
<div class="btn" style="left:12px;top:601px;width:128px">
 <span style="left:7px">Anzeigeoptionen</span>
 <svg style="left:110px;top:8px" width="12" height="8" viewBox="0 0 12 8"><g transform="translate(0.5 0.6)"><path d="M1 6 L5.4 1.8 L9.8 6" fill="none" stroke="#7c7c7c" stroke-width="2.3"/></g></svg>
</div>
<div class="btn" style="left:151px;top:601px;width:115px">
 <svg style="left:6px;top:2px" width="19" height="19" viewBox="0 0 19 19"><g transform="translate(0.8 0.4)"><path d="M3.2 .5H13.6L17.2 4.1V17.3H3.2Z" fill="#ececec" stroke="#bdbdbd"/><path d="M13.6 .5V4.1H17.2" fill="#d8d8d8" stroke="#bdbdbd"/><rect x=".5" y="3" width="9" height="7.6" fill="#d9d9d9" stroke="#bfbfbf"/><path d="M2.6 5L7.4 8.8M7.4 5L2.6 8.8" stroke="#fafafa" stroke-width="1.3"/><path d="M5 12.2H15.4M5 14.8H15.4M10.2 6.4V17M11 7.4H15.4M11 9.8H15.4" stroke="#bebebe" stroke-width="1"/></g></svg>
 <span style="left:29.6px">Excel-Export</span>
</div>
<div class="btn" style="left:277px;top:601px;width:150px">
 <svg style="left:9px;top:4px" width="15" height="14" viewBox="0 0 15 14"><g transform="translate(0.6 0.4)"><path d="M2.4 6.5V11.4M6.8 4.4V11.4M11.1 2V11.4" stroke="#787878" stroke-width="3" stroke-linecap="round"/></g></svg>
 <span style="left:28.2px">Graph erstellen</span>
 <span class="beta" style="left:121px;top:5px">Beta</span>
</div>
<div class="btn" style="left:439px;top:601px;width:211px">
 <svg style="left:9px;top:4px" width="17" height="17" viewBox="0 0 17 17"><g transform="translate(0.6 0.0)"><path d="M2.2 6.8V11.2M6.3 5V11.2M10.4 2V7.8" stroke="#787878" stroke-width="2.8" stroke-linecap="round"/><path d="M10.7 9.4V15.4M7.7 12.4H13.7" stroke="#777" stroke-width="2"/></g></svg>
 <span style="left:28.4px">Zu Dashboard hinzufügen</span>
 <span class="beta" style="left:182px;top:5px">Beta</span>
</div>
<div id="note">* Aktualisierung der Euribors®.</div>
<div id="fs"><b>Nominalbetrag</b><div>Zum jeweiligen Periodenende ausstehende Nominalbeträge (Restschulden) der zinstragenden Geschäfte unter Berücksichtigung der vorgegebenen Tilgungspläne.</div></div>

</body></html>
